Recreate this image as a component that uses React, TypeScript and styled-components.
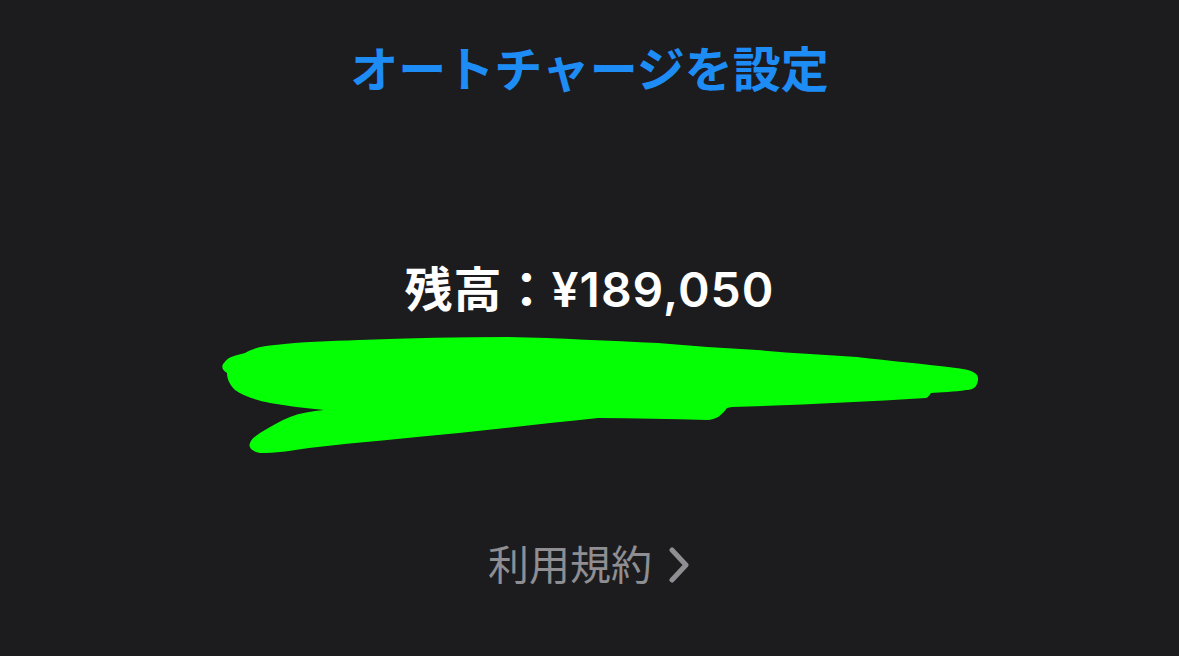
import * as React from "react";
import styled, { createGlobalStyle } from "styled-components";

const GlobalStyle = createGlobalStyle`
  html, body {
    margin: 0;
    padding: 0;
    background: #1c1c1e;
  }
  body {
    font-family: "Inter", "Noto Sans CJK JP", sans-serif;
  }
`;

export default function App() {
  return (
    <Page>
      <GlobalStyle />
      <ChargeLink>オートチャージを設定</ChargeLink>
      <Balance>残高：¥189,050</Balance>
      <Scribble
        width="800"
        height="150"
        viewBox="190 320 800 150"
        aria-hidden="true"
      >
        <path
          d="M224 363 C228 356 238 355 245 353 C255 347 265 346 275 345
             C300 342 330 341 359 340 C410 338 460 337 508 337
             C560 338 610 341 658 343 C690 346 725 348 757 350
             C790 353 825 355 857 357 C890 361 925 364 956 368
             C972 370 979 373 978 380 C977 388 972 390 966 390
             C955 392 940 392 931 393 C929 396 928 397 926 398
             C860 402 795 405 732 407 L727 408
             C722 415 716 420 707 420 C670 419 635 418 598 418
             C550 423 505 428 459 433 C410 438 360 442 309 448
             C290 451 275 453 260 453 C252 452 248 447 250 443
             C252 438 256 436 260 433 C270 427 280 421 290 417
             C300 413 312 411 324 410 C305 408 287 406 270 403
             C255 400 243 396 235 390 C229 384 227 378 227 373
             C222 370 221 366 224 363 Z"
          fill="#05ff05"
        />
      </Scribble>
      <TermsLink>
        <span>利用規約</span>
        <Chevron width="24" height="36" viewBox="0 0 24 36" aria-hidden="true">
          <path
            d="M5 3 L19 18 L5 33"
            fill="none"
            stroke="#8e8e93"
            strokeWidth="5"
            strokeLinecap="round"
            strokeLinejoin="round"
          />
        </Chevron>
      </TermsLink>
    </Page>
  );
}

const Page = styled.div`
  width: 1179px;
  height: 656px;
  background: #1c1c1e;
  display: flex;
  flex-direction: column;
  align-items: center;
  overflow: hidden;
`;

const ChargeLink = styled.div`
  margin-top: 40px;
  font-size: 48px;
  line-height: 60px;
  font-weight: 700;
  color: #1e8cf5;
`;

const Balance = styled.div`
  margin-top: 160px;
  font-size: 48px;
  line-height: 60px;
  font-weight: 600;
  letter-spacing: 1px;
  color: #ffffff;
`;

const Scribble = styled.svg`
  display: block;
`;

const TermsLink = styled.div`
  margin-top: 67px;
  display: flex;
  align-items: center;
  gap: 15px;
  font-size: 41px;
  line-height: 56px;
  font-weight: 400;
  color: #8e8e93;
`;

const Chevron = styled.svg`
  display: block;
`;
